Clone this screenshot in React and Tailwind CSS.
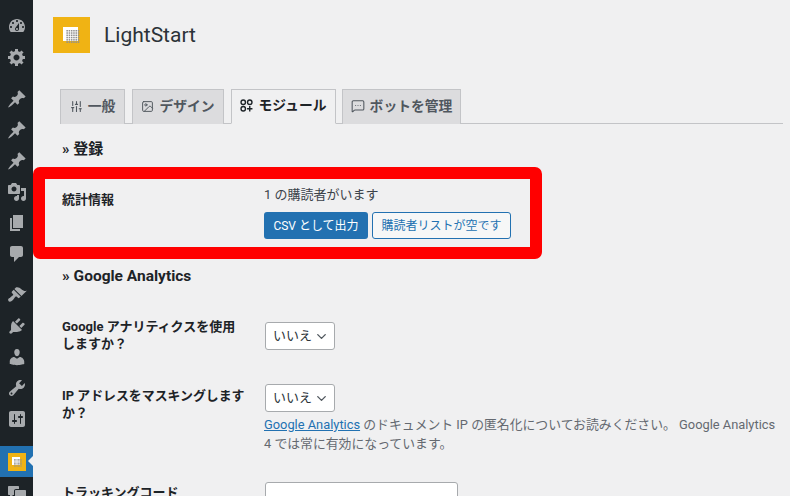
import React from "react";
import { SlidersVertical, Image, MessageSquareMore, ChevronDown } from "lucide-react";

const P = {
  dash: "M3.76 16h12.48c1.1-1.37 1.76-3.11 1.76-5 0-4.42-3.58-8-8-8s-8 3.58-8 8c0 1.89.66 3.63 1.76 5zM10 4c.55 0 1 .45 1 1s-.45 1-1 1-1-.45-1-1 .45-1 1-1zM6 6c.55 0 1 .45 1 1s-.45 1-1 1-1-.45-1-1 .45-1 1-1zm8 0c.55 0 1 .45 1 1s-.45 1-1 1-1-.45-1-1 .45-1 1-1zm-5.37 5.55L12 7v6c0 1.1-.9 2-2 2s-2-.9-2-2c0-.57.24-1.08.63-1.45zM4 10c.55 0 1 .45 1 1s-.45 1-1 1-1-.45-1-1 .45-1 1-1zm12 0c.55 0 1 .45 1 1s-.45 1-1 1-1-.45-1-1 .45-1 1-1zm-5 3c0-.55-.45-1-1-1s-1 .45-1 1 .45 1 1 1 1-.45 1-1z",
  gear: "M18 12h-2.18c-.17.7-.44 1.35-.81 1.93l1.54 1.54-2.1 2.1-1.54-1.54c-.58.36-1.23.63-1.91.79V19H8v-2.18c-.68-.16-1.33-.43-1.91-.79l-1.54 1.54-2.12-2.12 1.54-1.54c-.36-.58-.63-1.23-.79-1.91H1V9.03h2.17c.16-.7.44-1.35.8-1.94L2.43 5.55l2.1-2.1 1.54 1.54c.58-.37 1.24-.64 1.93-.81V2h3v2.18c.68.16 1.33.43 1.91.79l1.54-1.54 2.12 2.12-1.54 1.54c.36.59.64 1.24.8 1.94H18V12zm-8.5 1.5c1.66 0 3-1.34 3-3s-1.34-3-3-3-3 1.34-3 3 1.34 3 3 3z",
  pin: "M10.44 3.02l1.82-1.82 6.36 6.35-1.83 1.82c-1.05-.68-2.48-.57-3.41.36l-.75.75c-.92.93-1.04 2.35-.35 3.41l-1.83 1.82-2.41-2.41-2.8 2.79c-.42.42-3.38 2.71-3.8 2.29s1.86-3.39 2.28-3.81l2.79-2.79L4.1 9.36l1.83-1.82c1.05.69 2.48.57 3.4-.36l.75-.75c.93-.92 1.05-2.35.36-3.41z",
  media: "M13 11V4c0-.55-.45-1-1-1h-1.67L9 1H5L3.67 3H2c-.55 0-1 .45-1 1v7c0 .55.45 1 1 1h10c.55 0 1-.45 1-1zM7 4.5c1.38 0 2.5 1.12 2.5 2.5S8.38 9.5 7 9.5 4.5 8.38 4.5 7 5.62 4.5 7 4.5zM14 6h5v10.5c0 1.38-1.12 2.5-2.5 2.5S14 17.88 14 16.5s1.12-2.5 2.5-2.5c.17 0 .34.02.5.05V9h-3V6zm-4 8.05V13h2v3.5c0 1.38-1.12 2.5-2.5 2.5S7 17.88 7 16.5 8.12 14 9.5 14c.17 0 .34.02.5.05z",
  pages: "M6 15V2h10v13H6zm-1 1h8v2H3V5h2v11z",
  comment: "M5 2h9c1.1 0 2 .9 2 2v7c0 1.1-.9 2-2 2h-2l-5 5v-5H5c-1.1 0-2-.9-2-2V4c0-1.1.9-2 2-2z",
  brush: "M14.48 11.06L7.41 3.99l1.5-1.5c.5-.56 2.3-.47 3.51.32 1.21.8 1.43 1.28 2.91 2.1 1.18.64 2.45 1.26 4.45.85zm-.71.71L6.7 4.7 4.93 6.47c-.39.39-.39 1.02 0 1.41l1.06 1.06c.39.39.39 1.03 0 1.42-.6.6-1.43 1.11-2.21 1.69-.35.26-.7.53-1.01.84C1.43 13.23.97 14.2 1.13 15.1c.06.39.25.75.53 1.03.28.28.64.47 1.03.53.9.16 1.87-.3 3.2-1.64.31-.31.58-.66.84-1.01.58-.78 1.09-1.61 1.69-2.21.39-.39 1.03-.39 1.42 0l1.06 1.06c.39.39 1.02.39 1.41 0z",
  plug: "M13.11 4.36L9.87 7.6 8 5.73l3.24-3.24c.35-.34 1.05-.2 1.56.32.52.51.66 1.21.31 1.55zm-8 1.77l.91-1.12 9.01 9.01-1.19.84c-.71.71-2.63 1.16-3.82 1.16H6.14L4.9 17.26c-.59.59-1.54.59-2.12 0-.59-.58-.59-1.53 0-2.12l1.24-1.24v-3.88c0-1.13.4-3.19 1.09-3.89zm7.26 3.97l3.24-3.24c.34-.35 1.04-.21 1.55.31.52.51.66 1.21.31 1.55l-3.24 3.25z",
  user: "M10 9.25c-2.27 0-2.73-3.44-2.73-3.44C7 4.02 7.82 2 9.97 2c2.16 0 2.98 2.02 2.71 3.81 0 0-.41 3.44-2.68 3.44zm0 2.57L12.72 10c2.39 0 4.52 2.33 4.52 4.53v2.49s-3.65 1.13-7.24 1.13c-3.65 0-7.24-1.13-7.24-1.13v-2.49c0-2.25 1.94-4.48 4.47-4.48z",
  wrench: "M16.68 9.77c-1.34 1.34-3.3 1.67-4.95.99l-5.41 6.52c-.99.99-2.59.99-3.58 0s-.99-2.59 0-3.57l6.52-5.42c-.68-1.65-.35-3.61.99-4.95 1.28-1.28 3.12-1.62 4.72-1.06l-2.89 2.89 2.82 2.82 2.86-2.87c.53 1.58.18 3.39-1.08 4.67zM3.81 16.21c.4.39 1.04.39 1.43 0 .4-.4.4-1.04 0-1.43-.39-.4-1.03-.4-1.43 0-.39.39-.39 1.03 0 1.43z",
  settings: "M18 16V4c0-1.1-.9-2-2-2H4c-1.1 0-2 .9-2 2v12c0 1.1.9 2 2 2h12c1.1 0 2-.9 2-2zM8 11h1c.55 0 1 .45 1 1s-.45 1-1 1H8v1.5c0 .28-.22.5-.5.5s-.5-.22-.5-.5V13H6c-.55 0-1-.45-1-1s.45-1 1-1h1V5.5c0-.28.22-.5.5-.5s.5.22.5.5V11zm5-2h-1c-.55 0-1-.45-1-1s.45-1 1-1h1V5.5c0-.28.22-.5.5-.5s.5.22.5.5V7h1c.55 0 1 .45 1 1s-.45 1-1 1h-1v5.5c0 .28-.22.5-.5.5s-.5-.22-.5-.5V9z",
  forum: "M2 3h9c.6 0 1 .4 1 1v2H9c-1.1 0-2 .9-2 2v4H6l-3 3v-3H2c-.6 0-1-.4-1-1V4c0-.6.4-1 1-1zm7 4h9c.6 0 1 .4 1 1v7c0 .6-.4 1-1 1h-1v3l-3-3H9c-.6 0-1-.4-1-1V8c0-.6.4-1 1-1z",
};

function Dash({ d }) {
  return (
    <svg viewBox="0 0 20 20" className="w-[20px] h-[20px] fill-[#a7aaad]">
      <path d={d} />
    </svg>
  );
}

function MenuItem({ d }) {
  return (
    <div className="h-[31px] flex items-center justify-center shrink-0">
      <Dash d={d} />
    </div>
  );
}

function LogoMark({ box, grid }) {
  return (
    <div className={`${box} bg-[#f0b314] flex items-center justify-center`}>
      <div className={`${grid} relative`}>
        <div className="absolute left-0 top-0 w-[85%] h-[85%] bg-white" />
        <svg viewBox="0 0 14 14" className="absolute right-0 bottom-0 w-[78%] h-[78%]">
          <g fill="#8f8f8f">
            {[0, 2.4, 4.8, 7.2, 9.6, 12].map((y) =>
              [0, 2.4, 4.8, 7.2, 9.6, 12].map((x) => <rect key={`${x}-${y}`} x={x} y={y} width="1.6" height="1.6" />)
            )}
          </g>
        </svg>
      </div>
    </div>
  );
}

function Tab({ active, icon, label, w }) {
  return (
    <div
      className={`${w} h-[35px] pb-[2px] flex items-center justify-center gap-[5px] border border-[#c3c4c7] text-[13.8px] ${
        active
          ? "bg-[#f0f0f1] border-b-[#f0f0f1] text-[#1d2327] font-bold"
          : "bg-[#dcdcde] border-b-0 text-[#50575e] font-semibold"
      }`}
    >
      {icon}
      <span>{label}</span>
    </div>
  );
}

function Modules() {
  return (
    <svg viewBox="0 0 14 14" className="w-[13px] h-[13px] fill-none stroke-[#1d2327] stroke-[1.5]">
      <circle cx="3.5" cy="3.5" r="2.4" />
      <circle cx="10.5" cy="3.5" r="2.4" />
      <circle cx="3.5" cy="10.5" r="2.4" />
      <path d="M10.5 7.6v5.8M7.6 10.5h5.8" />
    </svg>
  );
}

function NoSelect({ className = "" }) {
  return (
    <div className={`w-[70px] h-[28px] bg-white border border-[#a7aaad] rounded-[3px] flex items-center justify-between pl-[7px] pr-[5px] text-[13px] text-[#2c3338] whitespace-nowrap ${className}`}>
      <span>いいえ</span>
      <ChevronDown size={15} strokeWidth={2.2} color="#50575e" />
    </div>
  );
}

export default function App() {
  return (
    <div className="w-[790px] h-[496px] overflow-hidden flex bg-[#f0f0f1] text-[#3c434a] font-['Roboto','Noto_Sans_CJK_JP',sans-serif]">
      <aside className="w-[33px] shrink-0 bg-[#1d2327] flex flex-col pt-[10px]">
        <MenuItem d={P.dash} />
        <MenuItem d={P.gear} />
        <div className="h-[11px] shrink-0" />
        <MenuItem d={P.pin} />
        <MenuItem d={P.pin} />
        <MenuItem d={P.pin} />
        <MenuItem d={P.media} />
        <MenuItem d={P.pages} />
        <MenuItem d={P.comment} />
        <div className="h-[10px] shrink-0" />
        <MenuItem d={P.brush} />
        <MenuItem d={P.plug} />
        <MenuItem d={P.user} />
        <MenuItem d={P.wrench} />
        <MenuItem d={P.settings} />
        <div className="h-[12px] shrink-0" />
        <div className="h-[31px] shrink-0 bg-[#2271b1] flex items-center justify-center relative">
          <LogoMark box="w-[18px] h-[18px]" grid="w-[10px] h-[10px]" />
          <div className="absolute right-0 top-[10px] border-y-[5px] border-y-transparent border-r-[5px] border-r-[#f0f0f1]" />
        </div>
        <MenuItem d={P.forum} />
      </aside>

      <main className="relative flex-1 min-w-0 pl-[20px] pr-[7px] pt-[17px]">
        <div className="flex items-center gap-[14px] h-[36px]">
          <LogoMark box="w-[37px] h-[36px]" grid="w-[18px] h-[17px]" />
          <h1 className="text-[21px] leading-none text-[#2c3338]">LightStart</h1>
        </div>

        <div className="mt-[36px] ml-[7px] flex h-[35px] border-b border-[#c3c4c7]">
          <Tab w="w-[65px]" label="一般" icon={<SlidersVertical size={13} strokeWidth={2} />} />
          <div className="w-[7px]" />
          <Tab w="w-[92px]" label="デザイン" icon={<Image size={13} strokeWidth={1.8} />} />
          <div className="w-[7px]" />
          <Tab w="w-[105px]" active label="モジュール" icon={<Modules />} />
          <div className="w-[6px]" />
          <Tab w="w-[119px]" label="ボットを管理" icon={<MessageSquareMore size={14} strokeWidth={1.8} />} />
        </div>

        <div className="ml-[9px]">
          <h2 className="mt-[15px] text-[15px] leading-[20px] font-bold text-[#1d2327]">» 登録</h2>

          <div className="mt-[26px] flex">
            <div className="w-[202px] pt-[5px] text-[13px] leading-[20px] font-bold text-[#1d2327]">統計情報</div>
            <div>
              <div className="text-[13px] leading-[20px]">1 の購読者がいます</div>
              <div className="mt-[7px] flex gap-[4px]">
                <div className="w-[104px] h-[27px] rounded-[3px] bg-[#2271b1] text-white text-[12px] flex items-center justify-center">CSV として出力</div>
                <div className="w-[139px] h-[27px] rounded-[3px] bg-[#f6f7f7] border border-[#2271b1] text-[#2271b1] text-[12px] flex items-center justify-center">購読者リストが空です</div>
              </div>
            </div>
          </div>

          <h2 className="mt-[27px] text-[15.5px] leading-[20px] font-bold text-[#1d2327]">» Google Analytics</h2>

          <div className="mt-[32px] flex">
            <div className="w-[203px] text-[13px] leading-[17px] font-bold text-[#1d2327]">
              Google アナリティクスを使用
              <br />
              しますか？
            </div>
            <NoSelect className="mt-[4px]" />
          </div>

          <div className="mt-[32px] flex">
            <div className="w-[203px] pt-[3px] text-[12.9px] leading-[17px] font-bold text-[#1d2327]">
              IP アドレスをマスキングします
              <br />
              か？
            </div>
            <div className="min-w-0">
              <NoSelect />
              <p className="-ml-[1px] mt-[3px] w-[514px] text-[12.85px] leading-[19px] text-[#646970]">
                <span className="text-[#2271b1] underline">Google Analytics</span> のドキュメント IP の匿名化についてお読みください。 Google Analytics 4 では常に有効になっています。
              </p>
            </div>
          </div>

          <div className="mt-[29px] flex">
            <div className="w-[203px] pt-[2px] text-[13px] leading-[18px] font-bold text-[#1d2327] whitespace-nowrap">トラッキングコード</div>
            <div className="w-[193px] h-[28px] bg-white border border-[#a7aaad] rounded-[3px]" />
          </div>
        </div>

        <div className="absolute left-0 top-[167px] w-[509px] h-[92px] border-[12px] border-[#ff0000] rounded-[7px] pointer-events-none" />
      </main>
    </div>
  );
}
